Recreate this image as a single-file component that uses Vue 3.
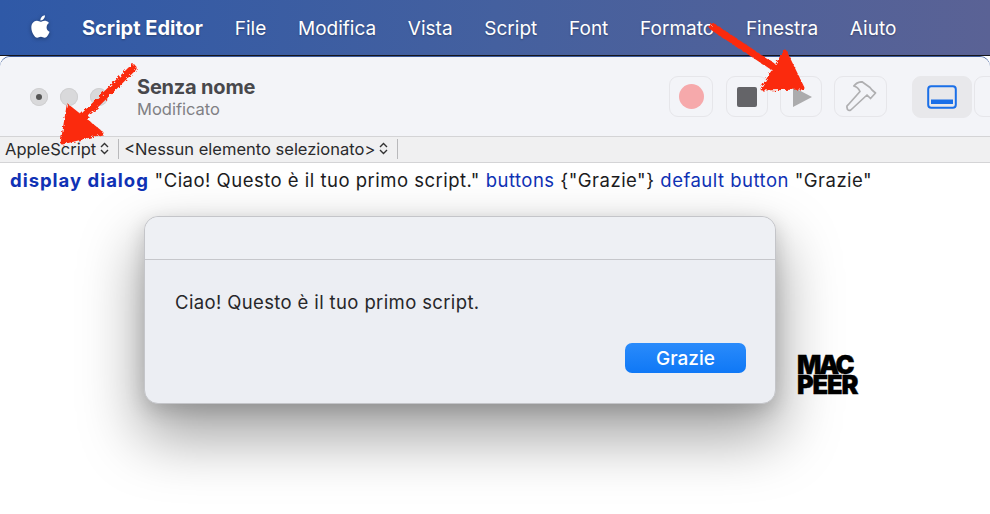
<script setup>
const menus = [
  { label: 'Script Editor', bold: true },
  { label: 'File' }, { label: 'Modifica' }, { label: 'Vista' }, { label: 'Script' },
  { label: 'Font' }, { label: 'Formato' }, { label: 'Finestra' }, { label: 'Aiuto' }
]
</script>

<template>
  <div class="screen">
    <header class="menubar">
      <svg class="apple" viewBox="0 0 24 24" width="27" height="27"><path fill="#fff" d="M18.71 19.5c-.83 1.24-1.71 2.45-3.05 2.47-1.34.03-1.77-.79-3.29-.79-1.53 0-2 .77-3.27.82-1.31.05-2.3-1.32-3.14-2.53C4.25 17 2.94 12.45 4.7 9.39c.87-1.52 2.43-2.48 4.12-2.51 1.28-.02 2.5.87 3.29.87.78 0 2.26-1.07 3.81-.91.65.03 2.47.26 3.64 1.98-.09.06-2.17 1.28-2.15 3.81.03 3.02 2.65 4.03 2.68 4.04-.03.07-.42 1.44-1.38 2.83M13 3.5c.73-.83 1.94-1.46 2.94-1.5.13 1.17-.34 2.35-1.04 3.19-.69.85-1.83 1.51-2.95 1.42-.15-1.15.41-2.35 1.05-3.11z"/></svg>
      <span v-for="m in menus" :key="m.label" class="menu" :class="{ bold: m.bold }">{{ m.label }}</span>
    </header>

    <main class="window">
      <section class="toolbar">
        <div class="lights">
          <span class="light active"><i></i></span>
          <span class="light"></span>
          <span class="light"></span>
        </div>
        <div class="title">
          <strong>Senza nome</strong>
          <span>Modificato</span>
        </div>
        <div class="tools">
          <button class="tool record"><i></i></button>
          <button class="tool stop"><i></i></button>
          <button class="tool play"><i></i></button>
          <button class="tool hammer">
            <svg viewBox="0 0 32 32" width="32" height="32" fill="none" stroke="#afafb1" stroke-width="1.7" stroke-linejoin="round">
              <path d="M8.8 5 Q12 .8 17 .8 L25 6.5 L27 9 L30.5 12 L25.5 17.5 L22 14 L5.8 29 Q4 30 2.5 28.5 L2 26.5 Q1.5 25 3 24 L15 10.5 Q13 6 8.8 5 Z"/>
            </svg>
          </button>
          <button class="tool panel">
            <svg viewBox="0 0 30 24" width="30" height="24" fill="none">
              <rect x="1.2" y="1.2" width="27.6" height="21.6" rx="3" stroke="#1a6fe8" stroke-width="2"/>
              <rect x="4" y="14.5" width="22" height="4.5" fill="#1a6fe8"/>
            </svg>
          </button>
          <button class="tool extra"></button>
        </div>
      </section>

      <nav class="navstrip">
        <span class="nav-item first">AppleScript<svg class="updown" viewBox="0 0 9 13" width="9" height="13" fill="none" stroke="#333" stroke-width="1.4"><path d="M1 5 4.5 1.5 8 5M1 8 4.5 11.5 8 8"/></svg></span>
        <span class="nav-item">&lt;Nessun elemento selezionato&gt;<svg class="updown" viewBox="0 0 9 13" width="9" height="13" fill="none" stroke="#333" stroke-width="1.4"><path d="M1 5 4.5 1.5 8 5M1 8 4.5 11.5 8 8"/></svg></span>
      </nav>

      <section class="editor">
        <p class="code"><b class="kw">display dialog</b> "Ciao! Questo è il tuo primo script." <span class="kw">buttons</span> {"Grazie"} <span class="kw">default button</span> "Grazie"</p>
      </section>
    </main>

    <aside class="dialog">
      <div class="dialog-head"></div>
      <div class="dialog-body">
        <p>Ciao! Questo è il tuo primo script.</p>
        <button class="ok">Grazie</button>
      </div>
    </aside>

    <div class="logo"><span class="mac">MAC</span><span class="peer">PEER</span></div>

    <svg class="arrows" viewBox="0 0 990 514" width="990" height="514">
      <defs>
        <filter id="crayon" x="-10%" y="-10%" width="120%" height="120%">
          <feTurbulence type="fractalNoise" baseFrequency="0.35" numOctaves="2" seed="4"/>
          <feDisplacementMap in="SourceGraphic" scale="5"/>
        </filter>
      </defs>
      <g fill="#fb2a10" stroke="#fb2a10" stroke-linejoin="round" stroke-linecap="round" filter="url(#crayon)">
        <path d="M133 68 L82 118" fill="none" stroke-width="7"/>
        <path d="M68 106 L102 133 L62 143 Z" stroke-width="3"/>
        <path d="M713 27 L772 66" fill="none" stroke-width="7"/>
        <path d="M785 51 L803 88 L762 89 Z" stroke-width="3"/>
      </g>
    </svg>
  </div>
</template>

<style scoped>
.screen {
  position: relative;
  width: 990px;
  height: 514px;
  overflow: hidden;
  background: #fff;
  font-family: Inter, "Noto Sans", sans-serif;
  color: #222;
}
.menubar {
  height: 56px;
  box-sizing: border-box;
  padding: 1px 0 0 27px;
  display: flex;
  align-items: center;
  background: linear-gradient(90deg, #2f59a7 0%, #44609f 50%, #5a6295 100%);
  border-bottom: 1px solid #16161c;
  color: #fff;
  font-size: 19px;
}
.apple { margin-right: 28px; margin-top: -3px; filter: drop-shadow(0 1px 2px rgba(0,0,0,.35)); }
.menu { margin-right: 31.75px; text-shadow: 0 1px 2px rgba(0,0,0,.3); white-space: nowrap; }
.menu.bold { font-weight: 700; font-size: 20px; }
.window {
  background: #fff;
  border-radius: 10px 10px 0 0;
  margin-top: 1px;
  height: 457px;
  display: flex;
  flex-direction: column;
  box-shadow: 0 -1px 0 #3b5a9a;
}
.toolbar {
  height: 79px;
  flex: none;
  display: flex;
  align-items: center;
  background: #f3f4f8;
  border-radius: 10px 10px 0 0;
  padding-left: 30px;
}
.lights { display: flex; gap: 12px; }
.light {
  width: 18px; height: 18px;
  border-radius: 50%;
  background: #d9d9db;
  box-shadow: inset 0 0 0 1px #cfcfd1;
  display: flex; align-items: center; justify-content: center;
}
.light.active i { width: 6px; height: 6px; border-radius: 50%; background: #555; }
.title { display: flex; flex-direction: column; margin-left: 29px; margin-top: 3px; }
.title strong { font-size: 20px; font-weight: 700; color: #48484c; letter-spacing: -0.2px; line-height: 23px; }
.title span { font-size: 16.5px; color: #808084; line-height: 21px; }
.tools { margin-left: auto; display: flex; align-items: center; width: 321px; flex: none; }
.tool {
  height: 41px;
  padding: 0;
  flex: none;
  display: flex; align-items: center; justify-content: center;
  background: transparent;
  border: 1px solid #e6e6ea;
  border-radius: 9px;
  box-sizing: border-box;
}
.record { width: 44px; margin-right: 13px; }
.record i { width: 25px; height: 25px; border-radius: 50%; background: #f6a9ab; }
.stop { width: 42px; margin-right: 12px; }
.stop i { width: 20px; height: 20px; border-radius: 2px; background: #646468; }
.play { width: 42px; margin-right: 12px; }
.play i { width: 0; height: 0; border-left: 19px solid #ababad; border-top: 10.5px solid transparent; border-bottom: 10.5px solid transparent; margin-left: 3px; }
.hammer { width: 53px; margin-right: 25px; }
.panel { width: 60px; height: 42px; margin-right: 2px; background: #e8e8eb; border-color: #e8e8eb; }
.extra { width: 40px; }
.navstrip {
  height: 27px;
  flex: none;
  box-sizing: border-box;
  display: flex;
  align-items: center;
  padding-bottom: 2px;
  background: #f0f0f1;
  border-top: 1px solid #d4d4d6;
  border-bottom: 1px solid #d4d4d6;
  font-size: 16.5px;
  color: #2a2a2c;
}
.nav-item {
  display: flex;
  align-items: center;
  height: 20px;
  padding-left: 5px;
  padding-right: 9px;
  border-right: 1px solid #b9b9bb;
  white-space: nowrap;
  gap: 4px;
}
.updown { flex: none; }
.editor { flex: 1; padding: 5px 0 0 10px; }
.code {
  margin: 0;
  font-size: 18.5px;
  letter-spacing: 0.49px;
  line-height: 24px;
  color: #1c1c1e;
  white-space: nowrap;
}
.kw { color: #0f32b5; }
b.kw { font-weight: 700; letter-spacing: 0.98px; }
.dialog {
  position: absolute;
  left: 144px;
  top: 216px;
  width: 632px;
  height: 188px;
  box-sizing: border-box;
  background: #eceef3;
  border: 1px solid #c4c5c9;
  border-radius: 14px;
  box-shadow: 0 30px 60px 4px rgba(0,0,0,.36), 0 6px 20px rgba(0,0,0,.16);
  display: flex;
  flex-direction: column;
}
.dialog-head { height: 42px; flex: none; border-bottom: 1px solid #c6c7cb; background: #eef0f4; border-radius: 14px 14px 0 0; }
.dialog-body { flex: 1; display: flex; flex-direction: column; padding: 30px 29px 0 30px; }
.dialog-body p { margin: 0; font-size: 18.5px; letter-spacing: 0.37px; line-height: 24px; color: #27272a; }
.ok {
  align-self: flex-end;
  margin-top: 29px;
  width: 121px;
  height: 30px;
  border: 0;
  border-radius: 7px;
  background: linear-gradient(#2a8bfb, #0f78f6);
  color: #fff;
  font: 500 19px Inter, sans-serif;
  padding: 0;
}
.logo {
  position: absolute;
  left: 797px;
  top: 355px;
  display: flex;
  flex-direction: column;
  font-size: 25.5px;
  line-height: 20px;
  font-weight: 900;
  color: #000;
  font-family: Inter, sans-serif;
  -webkit-text-stroke: 0.4px #000;
}
.mac { letter-spacing: -2.4px; }
.peer { letter-spacing: -1.2px; }
.arrows { position: absolute; left: 0; top: 0; pointer-events: none; }
</style>
